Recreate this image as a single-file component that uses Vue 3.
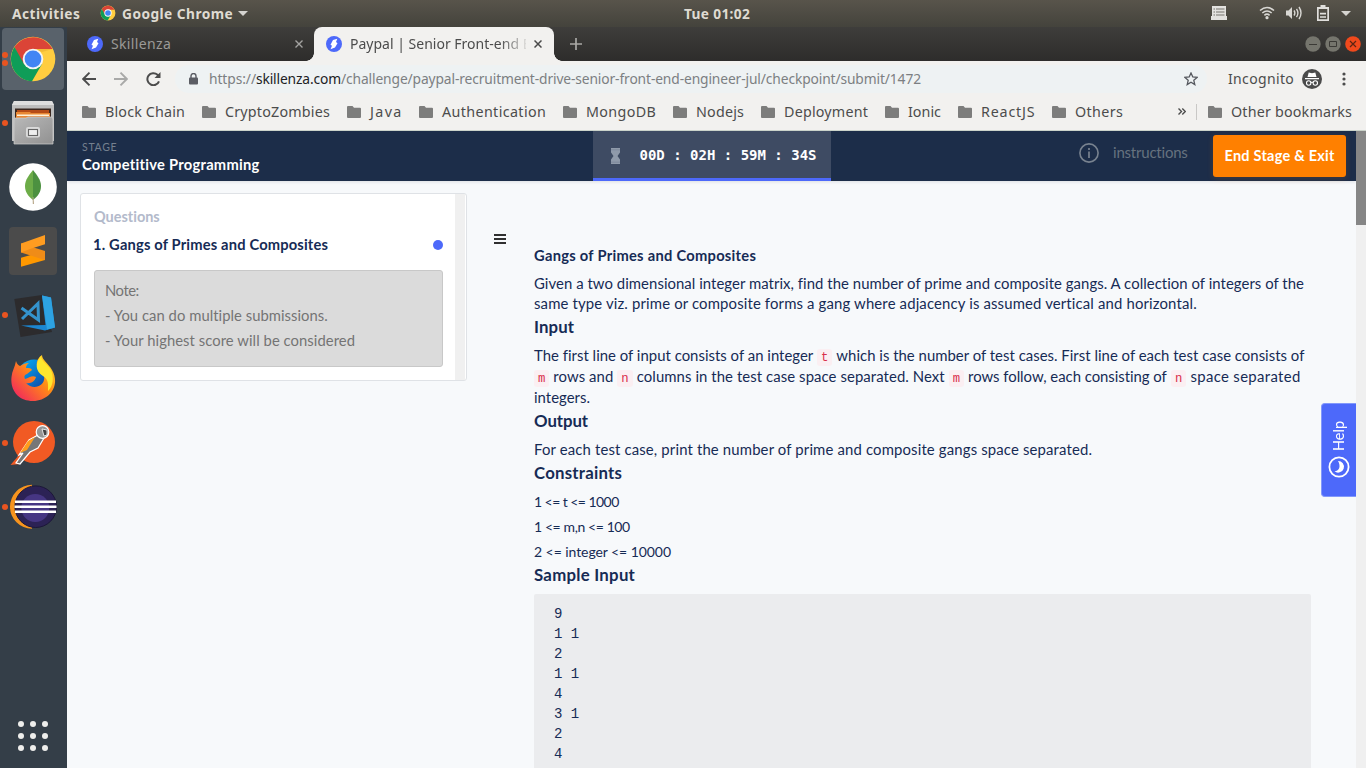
<script setup>
const bookmarks = [
  { name: 'Block Chain', w: 80 }, { name: 'CryptoZombies', w: 105 }, { name: 'Java', w: 32 },
  { name: 'Authentication', w: 104 }, { name: 'MongoDB', w: 70 }, { name: 'Nodejs', w: 48 },
  { name: 'Deployment', w: 84 }, { name: 'Ionic', w: 33 }, { name: 'ReactJS', w: 54 }, { name: 'Others', w: 48 },
]
const sample = ['9', '1 1', '2', '1 1', '4', '3 1', '2', '4'].join('\n')

// Tracks a label so that its glyphs span the given number of pixels.
const vFit = {
  mounted(el, { value }) {
    const range = document.createRange()
    range.selectNodeContents(el)
    const natural = range.getBoundingClientRect().width
    const count = el.textContent.length
    if (count > 1) el.style.letterSpacing = `${(value - natural) / (count - 0.5)}px`
    el.style.width = `${value}px`
  },
}
</script>

<template>
  <div class="desktop">
    <header class="topbar">
      <span v-fit="68" class="activities">Activities</span>
      <svg class="mini-chrome" viewBox="0 0 48 48"><circle cx="24" cy="24" r="22.300" fill="#ffcd40"/><path d="M5.500 12A22.300 22.300 0 0 1 43.500 14H24L14 31z" fill="#db4437"/><path d="M5.500 12A22.300 22.300 0 0 0 23 46.300L33 29 24 34 15 29z" fill="#0f9d58"/><circle cx="24" cy="24" r="11" fill="#fff"/><circle cx="24" cy="24" r="8.400" fill="#4285f4"/></svg>
      <span v-fit="111">Google Chrome</span>
      <svg class="caret" viewBox="0 0 10 5"><path d="M0 0h10L5 5z" fill="#d5d4d0"/></svg>
      <span v-fit="66" class="clock">Tue 01:02</span>
      <div class="tray">
        <svg width="16" height="14" viewBox="0 0 16 14"><path d="M1 0h14v10h1v4H0v-4h1z" fill="#e3e2df"/><path d="M2.500 3h1.500m1 0h8.500M2.500 6h1.500m1 0h8.500M2.500 9h1.500m1 0h8.500" stroke="#77756e" stroke-width="1"/></svg>
        <svg class="wifi" width="16" height="14" viewBox="0 0 16 14" fill="none" stroke="#d8d7d3" stroke-width="1.600"><path d="M1 4.500Q8-1.500 15 4.500"/><path d="M3.300 7Q8 3 12.700 7"/><path d="M5.400 9.300Q8 7 10.600 9.300"/><circle cx="8" cy="11.700" r="1.600" fill="#d8d7d3" stroke="none"/></svg>
        <svg class="sound" width="16" height="14" viewBox="0 0 16 14" fill="none" stroke="#d8d7d3" stroke-width="1.400"><path d="M0 4.500h2.500L6 1v12L2.500 9.500H0z" fill="#d8d7d3" stroke="none"/><path d="M8 4.500q1.700 2.500 0 5M10.500 2.800q2.800 4.200 0 8.400M13 1q4 6 0 12"/></svg>
        <svg class="battery" width="12" height="16" viewBox="0 0 12 16"><path d="M3.500 0h5v2H12v14H0V2h3.500zM1.700 4v10.300h8.600V4z" fill="#e0dfdc" fill-rule="evenodd"/><path d="M3 8.700h6M3 12h6" stroke="#e0dfdc" stroke-width="1.700"/></svg>
        <svg class="tray-caret" width="10" height="5" viewBox="0 0 10 5"><path d="M0 0h10L5 5z" fill="#d5d4d0"/></svg>
      </div>
    </header>

    <div class="workspace">
      <aside class="dock">
        <div class="cell active"><i class="dot two"></i><i class="dot three"></i>
          <svg viewBox="0 0 48 48"><circle cx="24" cy="24" r="22.300" fill="#ffcd40"/><path d="M5.500 12A22.300 22.300 0 0 1 43.500 14H24L14 31z" fill="#db4437"/><path d="M5.500 12A22.300 22.300 0 0 0 23 46.300L33 29 24 34 15 29z" fill="#0f9d58"/><path d="M24 14h19.500L33 17z" fill="#e5a82c" opacity=".5"/><circle cx="24" cy="24" r="10.300" fill="#f5f5f5"/><circle cx="24" cy="24" r="8.400" fill="#4285f4"/></svg></div>
        <div class="cell"><i class="dot"></i>
          <svg viewBox="0 0 48 48"><defs><linearGradient id="cab" x2="1" y2="1"><stop stop-color="#b9b9b9"/><stop offset="1" stop-color="#919191"/></linearGradient></defs><path d="M3 6 5 2h38l2 4v36H3z" fill="#bdbdbd"/><path d="M5 2h38l2 4H3z" fill="#dedede"/><path d="M6 9.500h36V21H6z" fill="#3b2820"/><path d="M8 11h32v5H8z" fill="#b64c17"/><path d="M7 13h14l1 1h19v7H7z" fill="#e88733"/><path d="M8 15.500h32v1.500H8z" fill="#fff1d8"/><path d="M5 19h12l2-1h24l1 2v25H5z" fill="url(#cab)" stroke="#d0d0d0" stroke-width=".7"/><rect x="17" y="28" width="14" height="10.500" rx="2" fill="#dadada"/><rect x="19.500" y="30.500" width="9" height="6" fill="#eee" stroke="#666" stroke-width="1.100"/></svg></div>
        <div class="cell"><svg viewBox="0 0 48 48"><circle cx="24" cy="24" r="23.800" fill="#fff"/><path d="M24 7C20 12 16 17 16 23c0 6 3 10 8 14z" fill="#6cac48"/><path d="M24 7c4 5 8 10 8 16 0 6-3 10-8 14z" fill="#4c9140"/><path d="M23.600 34h.9l.5 7h-1.200z" fill="#b8a88a"/></svg></div>
        <div class="cell"><svg viewBox="0 0 48 48"><rect width="48" height="48" rx="4" fill="#4b4b4b"/><path d="M12 30.700 36 24v9L12 39.800z" fill="#ff9800"/><path d="M12 16.500v9L36 33v-9z" fill="#ef8c18"/><path d="M12 16.500 36 8v9.300L21 22l-9 3.500z" fill="#ff9c20"/></svg></div>
        <div class="cell"><i class="dot"></i>
          <svg viewBox="0 0 48 48"><path d="M5.300 8 33 4l10 37-31.500 5z" fill="#2c2b2d"/><path d="m33 4.500 9 2 4 30-10 3L12 34.500 36.500 34z" fill="#1c86d1"/><path d="m33 4.500 9 2 4 30-8 2z" fill="#2da2e2"/><path d="m12.500 17 17 12-.5-16.500L13 28" fill="none" stroke="#3493cd" stroke-width="3"/></svg></div>
        <div class="cell"><svg viewBox="0 0 48 48"><defs><linearGradient id="ff" x1="1" y1="0" x2="0" y2="1"><stop stop-color="#ffeb2e"/><stop offset=".45" stop-color="#ff8a16"/><stop offset="1" stop-color="#f0156b"/></linearGradient><linearGradient id="ffb" x2="1" y2="1"><stop stop-color="#00b7ff"/><stop offset="1" stop-color="#17318f"/></linearGradient></defs><circle cx="25" cy="21" r="16.500" fill="url(#ffb)"/><path d="M7 6c1 3 2 4 4 5 3-2 6-3 9-3-2 1-3 3-3 5 3 0 5 0 6 2l-5 4c-3 1-3 3-2 5 4-1 7-4 11-2-1 4-5 7-10 6 7 8 20 3 18-7 0 0-6-5-7-10-1-5 2-9 5-11 0 5 6 8 10 15 9 16-3 31-19 31C10 46 1 36 2.500 22 3 16 6 12 7 6z" fill="url(#ff)"/><path d="M32 1c0 6 9 9 11 17 2 8 0 14-4 18 0-7 1-11-5-15-8-5-8-13-2-20z" fill="#ffe72d"/></svg></div>
        <div class="cell"><i class="dot"></i>
          <svg viewBox="0 0 48 48"><circle cx="25" cy="23" r="21" fill="#f15a24"/><path d="M1.500 46 10 36l3 3-2 6z" fill="#f15a24"/><path d="m29 16-9 5-10 15 4-2-7 10 4 1 10-12 8-4 6-10z" fill="#777" stroke="#fff" stroke-width="1.200"/><path d="m26 18-7 4-8 12 7-3z" fill="#ff9d1c"/><circle cx="33.500" cy="13" r="6.300" fill="#969696" stroke="#fff" stroke-width="1.200"/><path d="m33 10 5 1v5l-3 1z" fill="#444" stroke="#fff" stroke-width=".8"/></svg></div>
        <div class="cell"><i class="dot"></i>
          <svg viewBox="0 0 48 48"><path d="M23 1.800A22 22 0 0 0 23 45.800z" fill="#f7941e"/><circle cx="26.700" cy="23.700" r="20.800" fill="#2c2255" stroke="#1c1738"/><circle cx="26.300" cy="25" r="14" fill="#463683"/><path d="M6 18.700h41M5.500 23.700h42M6 28.700h41" stroke="#fff" stroke-width="2.600"/></svg></div>
        <div class="apps"><i v-for="n in 9" :key="n"></i></div>
      </aside>

      <section class="browser">
        <div class="tabs">
          <div class="tab idle">
            <svg class="fav" viewBox="0 0 16 16"><circle cx="8" cy="8" r="8" fill="#4d69fa"/><path d="m7 4 4.300-1.300L10 6l1.500 1.300L9 11.500l-4.500 1.800L6 9.800 4.500 8.700z" fill="#fff"/></svg>
            <span v-fit="60">Skillenza</span>
            <svg class="x" viewBox="0 0 8 8"><path d="m.5.5 7 7m0-7-7 7" stroke="#a4a3a1" stroke-width="1.400"/></svg>
          </div>
          <div class="tab current">
            <svg class="fav" viewBox="0 0 16 16"><circle cx="8" cy="8" r="8" fill="#4d69fa"/><path d="m7 4 4.300-1.300L10 6l1.500 1.300L9 11.500l-4.500 1.800L6 9.800 4.500 8.700z" fill="#fff"/></svg>
            <span class="title"><span v-fit="169">Paypal | Senior Front-end</span> <span class="cut">E</span></span>
            <svg class="x" viewBox="0 0 8 8"><path d="m.5.5 7 7m0-7-7 7" stroke="#4a4a4a" stroke-width="1.500"/></svg>
          </div>
          <svg class="plus" viewBox="0 0 12 12"><path d="M6 0v12M0 6h12" stroke="#a9a8a5" stroke-width="1.700"/></svg>
          <div class="controls">
            <svg viewBox="0 0 16 16"><circle cx="8" cy="8" r="7.700" fill="#75756d"/><path d="M4 8.500h8" stroke="#3b3a36"/></svg>
            <svg viewBox="0 0 16 16"><circle cx="8" cy="8" r="7.700" fill="#75756d"/><path d="M4.500 5.500h7v5h-7z" fill="none" stroke="#3b3a36"/></svg>
            <svg viewBox="0 0 16 16"><circle cx="8" cy="8" r="7.800" fill="#f0491c"/><path d="m5 5 6 6m0-6-6 6" stroke="#5b2413" stroke-width="1.200"/></svg>
          </div>
        </div>

        <div class="toolbar">
          <svg class="back" viewBox="0 0 14 14"><path d="M14 7H1.500M7.500.7 1.200 7l6.300 6.300" fill="none" stroke="#4c4c4c" stroke-width="1.900"/></svg>
          <svg class="forward" viewBox="0 0 14 14"><path d="M0 7h12.500M6.500.7 12.800 7l-6.300 6.300" fill="none" stroke="#a9a9a8" stroke-width="1.900"/></svg>
          <svg class="reload" viewBox="0 0 15 14"><path d="M13 9.300A6 6 0 1 1 11.500 2.800L13 4.300" fill="none" stroke="#4c4c4c" stroke-width="2"/><path d="M14.500 0v6h-6z" fill="#4c4c4c"/></svg>
          <div class="omnibox">
            <svg class="lock" viewBox="0 0 9 12"><path d="M2 5V3a2.500 2.500 0 0 1 5 0v2" fill="none" stroke="#5b5d64" stroke-width="1.400"/><rect y="4.500" width="9" height="7" rx="1" fill="#5b5d64"/></svg>
            <span v-fit="47" class="muted">https://</span><span v-fit="85" class="host">skillenza.com</span><span v-fit="580" class="muted">/challenge/paypal-recruitment-drive-senior-front-end-engineer-jul/checkpoint/submit/1472</span>
            <svg class="star" viewBox="0 0 14 14"><path d="m7 1 1.800 4 4.300.4-3.300 2.900 1 4.300L7 10.300l-3.800 2.300 1-4.300L.9 5.400 5.200 5z" fill="none" stroke="#55585e" stroke-width="1.300"/></svg>
          </div>
          <span v-fit="66" class="incog">Incognito</span>
          <svg class="spy" viewBox="0 0 20 20"><circle cx="10" cy="10" r="10" fill="#4b4b4b"/><path d="M6.700 3.500 10 4.300l3.300-.8L14.500 8h-9zM3 9h14v1.200H3z" fill="#fff"/><g fill="none" stroke="#fff" stroke-width="1.100"><circle cx="6.700" cy="14" r="2.200"/><circle cx="13.300" cy="14" r="2.200"/><path d="M9 13.500q1-.6 2 0"/></g></svg>
          <svg class="more" viewBox="0 0 4 14" fill="#4c4c4c"><circle cx="2" cy="2" r="1.600"/><circle cx="2" cy="7" r="1.600"/><circle cx="2" cy="12" r="1.600"/></svg>
        </div>

        <div class="bookmarks">
          <div v-for="b in bookmarks" :key="b.name" class="bm">
            <svg viewBox="0 0 14 12"><path d="M1 0h4.500L7 1.700h6q1 0 1 1V11q0 1-1 1H1q-1 0-1-1V1q0-1 1-1" fill="#7d7d7c"/></svg>
            <span v-fit="b.w">{{ b.name }}</span>
          </div>
          <svg class="chevrons" viewBox="0 0 8 7"><path d="m.5.5 3 3-3 3M4.300.5l3 3-3 3" fill="none" stroke="#4c4c4c" stroke-width="1.400"/></svg>
          <i class="sep"></i>
          <div class="bm other">
            <svg viewBox="0 0 14 12"><path d="M1 0h4.500L7 1.700h6q1 0 1 1V11q0 1-1 1H1q-1 0-1-1V1q0-1 1-1" fill="#7d7d7c"/></svg>
            <span v-fit="121">Other bookmarks</span>
          </div>
        </div>

        <div class="viewport">
          <div class="page">
            <nav class="stage">
              <div class="stage-name"><span v-fit="35" class="over">STAGE</span><span v-fit="178" class="name">Competitive Programming</span></div>
              <div class="timer">
                <svg viewBox="0 0 9 16"><path d="M0 0h9v4.500L6.500 8 9 11.500V16H0v-4.500L2.500 8 0 4.500z" fill="#8f9aaa"/><path d="M0 1.800h9M0 14.200h9" stroke="#737f92" stroke-width=".6"/></svg>
                <span>00D : 02H : 59M : 34S</span>
              </div>
              <div class="info">
                <svg viewBox="0 0 20 20"><circle cx="10" cy="10" r="9.100" fill="none" stroke="#78828f" stroke-width="1.600"/><path d="M10 8.500V15M10 5v2" stroke="#78828f" stroke-width="1.700"/></svg>
                <span v-fit="75">instructions</span>
              </div>
              <button class="exit"><span v-fit="110">End Stage &amp; Exit</span></button>
            </nav>
            <main class="content">
              <div class="card">
                <div class="card-body">
                  <span v-fit="66" class="q-head">Questions</span>
                  <div class="q-row"><span v-fit="235">1. Gangs of Primes and Composites</span><i></i></div>
                  <div class="note">
                    <span v-fit="34">Note:</span><span v-fit="223">- You can do multiple submissions.</span><span v-fit="250">- Your highest score will be considered</span>
                  </div>
                </div>
                <div class="card-track"></div>
              </div>
              <svg class="burger" viewBox="0 0 12 10"><path d="M0 1h12M0 5h12M0 9h12" stroke="#303030" stroke-width="2"/></svg>
              <article class="problem">
                <h2><span v-fit="222">Gangs of Primes and Composites</span></h2>
                <div class="para tight">
                  <div><span v-fit="770">Given a two dimensional integer matrix, find the number of prime and composite gangs. A collection of integers of the</span></div>
                  <div><span v-fit="663">same type viz. prime or composite forms a gang where adjacency is assumed vertical and horizontal.</span></div>
                </div>
                <h3><span v-fit="40">Input</span></h3>
                <div class="para coded">
                  <div><span v-fit="279">The first line of input consists of an integer</span><code>t</code><span v-fit="468">which is the number of test cases. First line of each test case consists of</span></div>
                  <div class="lead"><code>m</code><span v-fit="60">rows and</span><code>n</code><span v-fit="308">columns in the test case space separated. Next</span><code>m</code><span v-fit="199">rows follow, each consisting of</span><code>n</code><span v-fit="110">space separated</span></div>
                  <div><span v-fit="56">integers.</span></div>
                </div>
                <h3><span v-fit="54">Output</span></h3>
                <div class="para tight"><div><span v-fit="558">For each test case, print the number of prime and composite gangs space separated.</span></div></div>
                <h3><span v-fit="88">Constraints</span></h3>
                <div class="limits">
                  <span v-fit="85">1 &lt;= t &lt;= 1000</span><span v-fit="96">1 &lt;= m,n &lt;= 100</span><span v-fit="137">2 &lt;= integer &lt;= 10000</span>
                </div>
                <h3><span v-fit="101">Sample Input</span></h3>
                <pre>{{ sample }}</pre>
              </article>
            </main>
            <div class="help">
              <span>Help</span>
              <svg viewBox="0 0 22 22"><circle cx="11" cy="11" r="9.600" fill="none" stroke="#fff" stroke-width="1.800"/><path d="M10 5a5.800 5.800 0 1 1-3.500 10.300c5-.3 6.500-5.300 3.500-10.300" fill="#fff"/></svg>
            </div>
          </div>
          <div class="scroll"><i></i></div>
        </div>
      </section>
    </div>
  </div>
</template>

<style>
html, body { margin: 0; overflow: hidden; }
</style>

<style scoped>
* { box-sizing: border-box; }
svg { display: block; flex: none; }
span { white-space: nowrap; }
.desktop { width: 1366px; height: 768px; display: flex; flex-direction: column; overflow: hidden; font-family: "Noto Sans", sans-serif; font-size: 14px; color: #4c4c4c; }
.desktop span { flex: none; display: inline-block; }
.topbar { height: 27px; flex: none; display: flex; align-items: center; padding: 0 0 1px 12px; background: linear-gradient(#58544b, #44433c); color: #dfdbd2; font-weight: 700; font-size: 13.700px; }
.mini-chrome { width: 16px; height: 16px; margin: 0 6px 0 20px; }
.caret { width: 10px; height: 5px; margin-left: 5px; }
.clock { margin-left: 436px; }
.tray { display: flex; align-items: center; margin-left: 461px; }
.wifi { margin-left: 32px; }
.sound { margin-left: 11px; }
.battery { margin-left: 15px; }
.tray-caret { margin-left: 12px; }
.workspace { flex: 1; display: flex; min-height: 0; }
.dock { width: 67px; flex: none; background: #343e48; display: flex; flex-direction: column; }
.cell { height: 64px; flex: none; position: relative; padding: 8px 9px; }
.cell svg { width: 48px; height: 48px; position: relative; }
.cell.active::before { content: ""; position: absolute; left: 2px; top: 1px; width: 62px; height: 62px; border-radius: 4px; background: #59626b; }
.dot { position: absolute; left: 2px; top: 29px; width: 6px; height: 6px; border-radius: 50%; background: #e95420; }
.dot.two { top: 25px; }
.dot.three { top: 33px; }
.apps { margin: auto auto 17px 18px; display: grid; grid-template-columns: repeat(3, 6px); gap: 6px; }
.apps i { width: 6px; height: 6px; border-radius: 50%; background: #eeeeec; }
.browser { flex: 1; min-width: 0; display: flex; flex-direction: column; }
.tabs { height: 34px; flex: none; display: flex; align-items: center; background: linear-gradient(#3e3d3b, #2d2c2b); }
.tab { height: 34px; display: flex; align-items: center; }
.tab span { line-height: 20px; }
.fav { width: 16px; height: 16px; }
.idle { width: 247px; padding-left: 20px; color: #9b9a97; }
.idle > span { margin-left: 8px; padding-bottom: 1px; }
.idle .x { margin-left: 124px; }
.x { width: 8px; height: 8px; }
.current { width: 240px; padding-left: 12px; background: #f2f1ef; border-radius: 8px 8px 0 0; position: relative; }
.current::before, .current::after { content: ""; position: absolute; bottom: 0; width: 8px; height: 8px; }
.current::before { left: -8px; background: radial-gradient(circle at 0 0, transparent 7.500px, #f2f1ef 8px); }
.current::after { right: -8px; background: radial-gradient(circle at 100% 0, transparent 7.500px, #f2f1ef 8px); }
.title { margin-left: 8px; width: 176px; overflow: hidden; padding-bottom: 1px; -webkit-mask-image: linear-gradient(90deg, #000 150px, transparent 180px); mask-image: linear-gradient(90deg, #000 150px, transparent 180px); }
.current .x { margin-left: 8px; }
.plus { width: 12px; height: 12px; margin-left: 16px; }
.controls { margin-left: auto; display: flex; gap: 4px; padding-right: 5px; }
.controls svg { width: 16px; height: 16px; }
.toolbar { height: 36px; flex: none; display: flex; align-items: center; background: #f2f1ef; padding-left: 15px; }
.back, .forward { width: 14px; height: 14px; }
.forward { margin-left: 18px; }
.reload { width: 15px; height: 14px; margin-left: 18px; }
.omnibox { margin-left: 14px; width: 1032px; height: 28px; border-radius: 14px; background: #eef2f3; display: flex; align-items: center; padding-left: 14px; font-size: 13.800px; }
.omnibox span { padding-bottom: 2px; }
.lock { width: 9px; height: 12px; margin: 0 11px 0 0; }
.muted { color: #7c7f82; }
.host { color: #202124; }
.star { width: 14px; height: 14px; margin-left: 263px; }
.incog { margin-left: 21px; padding-bottom: 1px; }
.spy { width: 20px; height: 20px; margin-left: 8px; }
.more { width: 4px; height: 14px; margin-left: 20px; }
.bookmarks { height: 34px; flex: none; display: flex; align-items: center; background: #f2f1ef; padding: 0 0 4px 15px; border-bottom: 1px solid #cbd3ca; font-size: 14.300px; }
.bm { display: flex; align-items: center; margin-right: 17px; flex: none; }
.bm svg { width: 14px; height: 12px; margin-right: 9px; }
.chevrons { width: 8px; height: 7px; margin-left: 38px; }
.sep { width: 1px; height: 16px; background: #c9c8c6; margin: 0 11px 0 10px; }
.other { margin: 0; }
.viewport { flex: 1; display: flex; min-height: 0; font-family: Lato, sans-serif; }
.page { width: 1289px; background: #f7f9fb; position: relative; display: flex; flex-direction: column; overflow: hidden; }
.scroll { width: 10px; background: #f0f0f0; }
.scroll i { display: block; height: 94px; background: #868686; }
.stage { height: 50px; flex: none; background: #1c2d49; display: flex; align-items: flex-start; box-shadow: 0 1px 3px rgba(30, 40, 60, .12); }
.stage-name { width: 511px; margin-left: 15px; display: flex; flex-direction: column; }
.over { font-size: 10.500px; line-height: 14px; margin-top: 9px; color: #75808f; }
.name { color: #fff; font-weight: 700; font-size: 14.700px; line-height: 20px; }
.timer { width: 238px; height: 50px; background: #3e4b63; border-bottom: 3px solid #4d69fa; display: flex; align-items: center; padding: 2px 0 0 18px; font: 700 14px "DejaVu Sans Mono", monospace; color: #fff; }
.timer svg { width: 9px; height: 16px; margin-right: 19.500px; }
.timer span { padding-bottom: 2px; }
.info { display: flex; align-items: center; height: 43px; margin-left: 248px; color: #66727f; font-size: 15px; }
.info svg { width: 20px; height: 20px; margin-right: 14px; }
.info span { padding-bottom: 2px; }
.exit { width: 133px; height: 42px; margin: 4px 0 0 25px; padding: 0 0 1px; border: 0; border-radius: 3px; background: #ff8000; color: #fff; font: 700 14.500px Lato, sans-serif; box-shadow: 0 2px 6px rgba(255, 128, 0, .15); flex: none; }
.content { display: flex; align-items: flex-start; color: #162b55; }
.card { width: 387px; height: 188px; margin: 12px 0 0 13px; border: 1px solid #dfe2e6; border-radius: 3px; background: #fff; display: flex; flex: none; }
.card-body { width: 374px; padding: 13px 12px 0 13px; }
.card-track { width: 10px; background: #f0f0f0; }
.q-head { color: #b3bacb; font-weight: 700; line-height: 20px; font-size: 14.500px; }
.q-row { display: flex; align-items: center; justify-content: space-between; font-weight: 700; font-size: 14.700px; height: 20px; margin: 8px 0 15px -1px; }
.q-row span { padding-bottom: 2px; }
.q-row i { width: 10px; height: 10px; border-radius: 50%; background: #4d69fa; }
.note { width: 349px; height: 97px; background: #dbdbdb; border: 1px solid #c8c8c8; border-radius: 3px; padding: 7px 10px; display: flex; flex-direction: column; color: #747474; line-height: 25px; font-size: 14.800px; }
.burger { width: 12px; height: 10px; margin: 53px 0 0 27px; }
.problem { margin: 65px 0 0 28px; width: 777px; font-size: 14.900px; }
h2, h3 { margin: 0; font-weight: 700; }
h2 { font-size: 14.700px; line-height: 18px; height: 20px; margin-bottom: 8px; }
h3 { font-size: 16.800px; line-height: 26px; height: 26px; }
h3 + div, h3 + pre { margin-top: 6px; }
.para > div { display: flex; height: 21px; line-height: 18px; }
.para.tight > div { height: 20px; }
h3 + .coded { margin: 6px 0 -1px; }
code { font: 12.250px/17px "Liberation Mono", monospace; height: 17px; margin: 3px 4px 0; padding: 1px 4px 0; border-radius: 3px; background: #fbeff2; color: #d92d4b; }
.lead code:first-child { margin-left: 0; }
.limits { display: flex; flex-direction: column; gap: 5px; line-height: 20px; font-size: 14px; }
pre { height: 200px; margin: 0; padding: 10px 20px; background: #ebecee; border-radius: 2px; font: 14px/20px "Liberation Mono", monospace; }
.help { position: absolute; right: 0; top: 272px; width: 35px; height: 94px; border-radius: 4px 0 0 4px; background: #4d69fa; border: 1px solid #8298fb; border-right: 0; color: #fff; display: flex; flex-direction: column; align-items: center; padding-top: 17px; }
.help span { writing-mode: vertical-rl; transform: rotate(180deg); font-size: 14.500px; height: 30px; line-height: 18px; }
.help svg { width: 22px; height: 22px; margin: 5px 0 0; }
</style>
